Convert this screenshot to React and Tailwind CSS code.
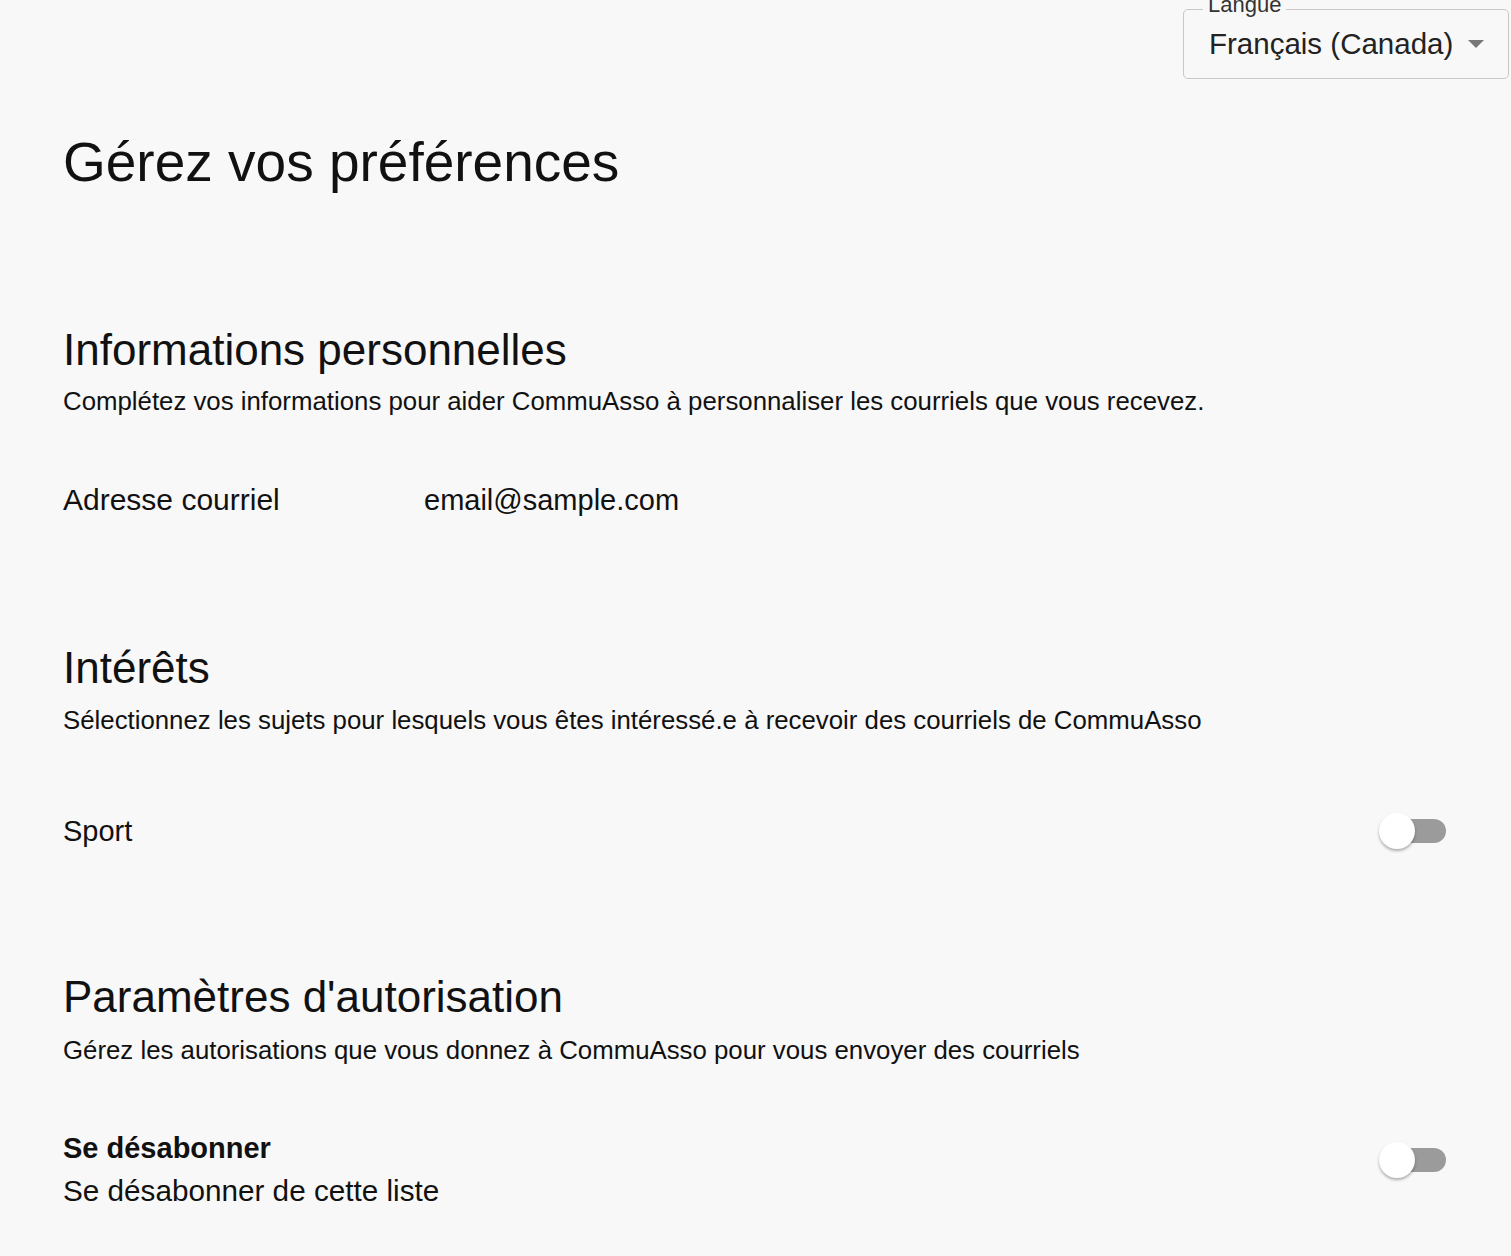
import React, { useState } from 'react';

function Toggle({ checked, onChange }) {
  return (
    <button
      type="button"
      onClick={() => onChange(!checked)}
      className="relative w-[67px] h-[36px] shrink-0 flex items-center"
    >
      <span className={`absolute left-[6px] right-0 h-[24px] rounded-full ${checked ? 'bg-[#90caf9]' : 'bg-[#9b9b9b]'}`} />
      <span
        className={`absolute top-0 w-[36px] h-[36px] rounded-full shadow-[0_2px_3px_rgba(0,0,0,0.3)] transition-all ${checked ? 'left-[31px] bg-[#1976d2]' : 'left-0 bg-white'}`}
      />
    </button>
  );
}

function App() {
  const [sport, setSport] = useState(false);
  const [unsub, setUnsub] = useState(false);

  return (
    <div className="min-h-screen bg-[#f8f8f8] text-[#111] font-['Liberation_Sans',Arial,sans-serif] pb-10">
      {/* langue */}
      <div className="flex justify-end pt-[9px] pr-[2px]">
        <div className="relative w-[326px] h-[70px] border border-[#c8c8c8] rounded-[5px] flex items-center justify-between pl-[25px] pr-[24px]">
          <span className="absolute -top-[18px] left-[19px] px-[5px] bg-[#f8f8f8] text-[22px] leading-[26px] text-[#333]">Langue</span>
          <span className="text-[29.5px] leading-[34px] text-[#222]">Français (Canada)</span>
          <svg width="16" height="8" viewBox="0 0 16 8"><path d="M0 0h16L8 8z" fill="#777" /></svg>
        </div>
      </div>

      <main className="pl-[63px] pr-[65px]">
        <h1 className="mt-[51px] text-[55px] leading-[64px] font-normal">Gérez vos préférences</h1>

        {/* Informations personnelles */}
        <h2 className="mt-[130px] text-[44px] leading-[52px]">Informations personnelles</h2>
        <p className="mt-[9px] text-[25.8px] leading-[32px]">Complétez vos informations pour aider CommuAsso à personnaliser les courriels que vous recevez.</p>
        <div className="mt-[65px] flex text-[29px] leading-[36px]">
          <span className="w-[361px] text-[30px]">Adresse courriel</span>
          <span>email@sample.com</span>
        </div>

        {/* Intérêts */}
        <h2 className="mt-[124px] text-[44px] leading-[52px]">Intérêts</h2>
        <p className="mt-[10px] text-[25.8px] leading-[32px]">Sélectionnez les sujets pour lesquels vous êtes intéressé.e à recevoir des courriels de CommuAsso</p>
        <div className="mt-[77px] flex items-center justify-between">
          <span className="text-[29px] leading-[36px]">Sport</span>
          <Toggle checked={sport} onChange={setSport} />
        </div>

        {/* Autorisation */}
        <h2 className="mt-[122px] text-[44px] leading-[52px]">Paramètres d'autorisation</h2>
        <p className="mt-[11px] text-[25.8px] leading-[32px]">Gérez les autorisations que vous donnez à CommuAsso pour vous envoyer des courriels</p>
        <div className="mt-[64px] flex items-start justify-between">
          <div>
            <div className="text-[29px] leading-[36px] font-bold">Se désabonner</div>
            <div className="mt-[7px] text-[29.7px] leading-[36px]">Se désabonner de cette liste</div>
          </div>
          <div className="mt-[12px]">
            <Toggle checked={unsub} onChange={setUnsub} />
          </div>
        </div>
      </main>
    </div>
  );
}

export default App;
